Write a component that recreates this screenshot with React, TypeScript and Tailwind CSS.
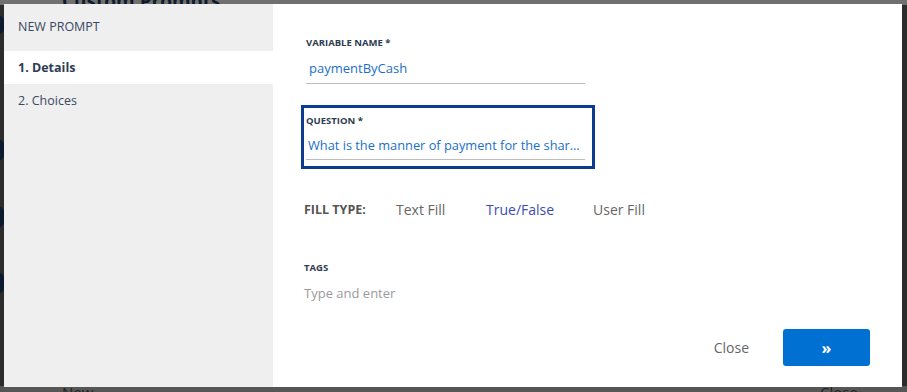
export default function App() {
  return (
    <div
      className="relative h-[392px] w-[907px] overflow-hidden bg-[#2c2c2c]"
      style={{ fontFamily: '"Open Sans", "Liberation Sans", sans-serif' }}
    >
      {/* page behind the overlay */}
      <div className="absolute inset-x-0 top-0 h-[5px] bg-[#707070]">
        <span className="absolute left-[62px] top-[-13px] text-[19px] font-bold text-[#0f1a2b]">Custom Prompts</span>
      </div>
      <div className="absolute inset-x-0 bottom-0 h-[6px] bg-[#565656]">
        <span className="absolute left-[62px] top-[-1px] text-[15px] leading-none text-[#222]">New</span>
        <span className="absolute left-[820px] top-[-1px] text-[15px] leading-none text-[#222]">Close</span>
      </div>
      <div className="absolute left-[-6px] top-[16px] h-[18px] w-[10px] rounded-full bg-[#0b1a2e]" />
      <div className="absolute left-[-6px] top-[140px] h-[20px] w-[10px] rounded-full bg-[#0b1a2e]" />
      <div className="absolute left-[-6px] top-[207px] h-[20px] w-[10px] rounded-full bg-[#0b1a2e]" />
      <div className="absolute left-[-6px] top-[273px] h-[20px] w-[10px] rounded-full bg-[#0b1a2e]" />

      {/* modal */}
      <div className="absolute left-[4px] top-[4px] flex h-[383px] w-[898px] bg-white">
        <aside className="flex w-[269px] flex-col bg-[#efefef] text-[12.5px] text-[#3a4862]">
          <div className="px-[14px] pt-[14px] pb-[15px] leading-[18px]">NEW PROMPT</div>
          <div className="bg-white px-[14px] py-[8px] leading-[17px] font-bold text-[#2e3b55]">1. Details</div>
          <div className="px-[14px] py-[8px] leading-[17px]">2. Choices</div>
        </aside>

        <main className="flex flex-1 flex-col pl-[33px] pr-[32px] pt-[32px]">
          <div className="w-[279px]">
            <div className="text-[9.5px] font-bold leading-[14px] text-[#2f3b52]">VARIABLE NAME *</div>
            <div className="mt-[9px] border-b border-[#bdbdbd] pb-[5px] pl-[3px] text-[13px] leading-[19px] text-[#1b6fc9]">
              paymentByCash
            </div>
          </div>

          <div className="ml-[-5px] mt-[21px] w-[294px] border-[3px] border-[#0b3c8f] px-[2px] pt-[6px] pb-[6px]">
            <div className="text-[9.5px] font-bold leading-[14px] text-[#2f3b52]">QUESTION *</div>
            <div className="mt-[8px] w-[279px] truncate border-b border-[#bdbdbd] pb-[4px] pl-[2px] text-[12.8px] leading-[19px] text-[#1b6fc9]">
              What is the manner of payment for the shares?
            </div>
          </div>

          <div className="ml-[-2px] mt-[31px] flex items-center text-[14px] leading-[19px]">
            <span className="w-[92px] text-[12.5px] font-bold text-[#555]">FILL TYPE:</span>
            <span className="w-[90px] text-[#666]">Text Fill</span>
            <span className="w-[107px] text-[#3b4db0]">True/False</span>
            <span className="text-[#666]">User Fill</span>
          </div>

          <div className="ml-[-2px] mt-[42px] text-[9.5px] font-bold leading-[14px] text-[#2f3b52]">TAGS</div>
          <div className="ml-[-2px] mt-[9px] text-[13px] leading-[18px] text-[#9b9b9b]">Type and enter</div>

          <div className="mt-auto mb-[21px] flex items-center justify-end">
            <button className="mr-[34px] text-[14px] text-[#666]">Close</button>
            <button className="flex h-[37px] w-[87px] items-center justify-center rounded-[3px] bg-[#0070d2] text-[16px] font-bold text-white">
              »
            </button>
          </div>
        </main>
      </div>
    </div>
  );
}
